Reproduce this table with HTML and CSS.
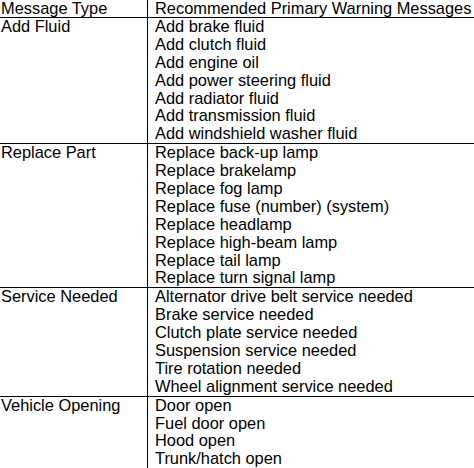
FILE: index.html
```html
<!DOCTYPE html>
<html>
<head>
<meta charset="utf-8">
<link rel="stylesheet" href="styles.css">
</head>
<body>
<table class="msg-table">
  <thead>
    <tr class="head-row">
      <th class="col-type">Message Type</th>
      <th class="col-msg">Recommended Primary Warning Messages</th>
    </tr>
  </thead>
  <tbody>
    <tr class="group">
      <td class="col-type"><div class="line">Add Fluid</div></td>
      <td class="col-msg">
        <div class="line">Add brake fluid</div>
        <div class="line">Add clutch fluid</div>
        <div class="line">Add engine oil</div>
        <div class="line">Add power steering fluid</div>
        <div class="line">Add radiator fluid</div>
        <div class="line">Add transmission fluid</div>
        <div class="line">Add windshield washer fluid</div>
      </td>
    </tr>
    <tr class="group">
      <td class="col-type"><div class="line">Replace Part</div></td>
      <td class="col-msg">
        <div class="line">Replace back-up lamp</div>
        <div class="line">Replace brakelamp</div>
        <div class="line">Replace fog lamp</div>
        <div class="line">Replace fuse (number) (system)</div>
        <div class="line">Replace headlamp</div>
        <div class="line">Replace high-beam lamp</div>
        <div class="line">Replace tail lamp</div>
        <div class="line">Replace turn signal lamp</div>
      </td>
    </tr>
    <tr class="group">
      <td class="col-type"><div class="line">Service Needed</div></td>
      <td class="col-msg">
        <div class="line">Alternator drive belt service needed</div>
        <div class="line">Brake service needed</div>
        <div class="line">Clutch plate service needed</div>
        <div class="line">Suspension service needed</div>
        <div class="line">Tire rotation needed</div>
        <div class="line">Wheel alignment service needed</div>
      </td>
    </tr>
    <tr class="group">
      <td class="col-type"><div class="line">Vehicle Opening</div></td>
      <td class="col-msg">
        <div class="line">Door open</div>
        <div class="line">Fuel door open</div>
        <div class="line">Hood open</div>
        <div class="line">Trunk/hatch open</div>
      </td>
    </tr>
  </tbody>
</table>
</body>
</html>
```

FILE: styles.css
```css
html, body {
  margin: 0;
  padding: 0;
  background: #fff;
}
body {
  font-family: "Liberation Sans", Arial, sans-serif;
  font-size: 16.4px;
  color: #000;
  width: 474px;
  height: 468px;
  overflow: hidden;
}
.msg-table {
  border-collapse: collapse;
  width: 474px;
}
.msg-table th,
.msg-table td {
  padding: 0;
  vertical-align: top;
  text-align: left;
  font-weight: normal;
}
.head-row th {
  height: 17px;
  line-height: 17px;
  border-bottom: 1px solid #000;
}
.col-type {
  width: 146px;
  padding-left: 1px !important;
  border-right: 1px solid #000;
}
.col-msg {
  padding-left: 7px !important;
}
.group td {
  border-bottom: 1px solid #000;
}
.line {
  height: 17.9px;
  line-height: 17.9px;
  white-space: nowrap;
}
```
